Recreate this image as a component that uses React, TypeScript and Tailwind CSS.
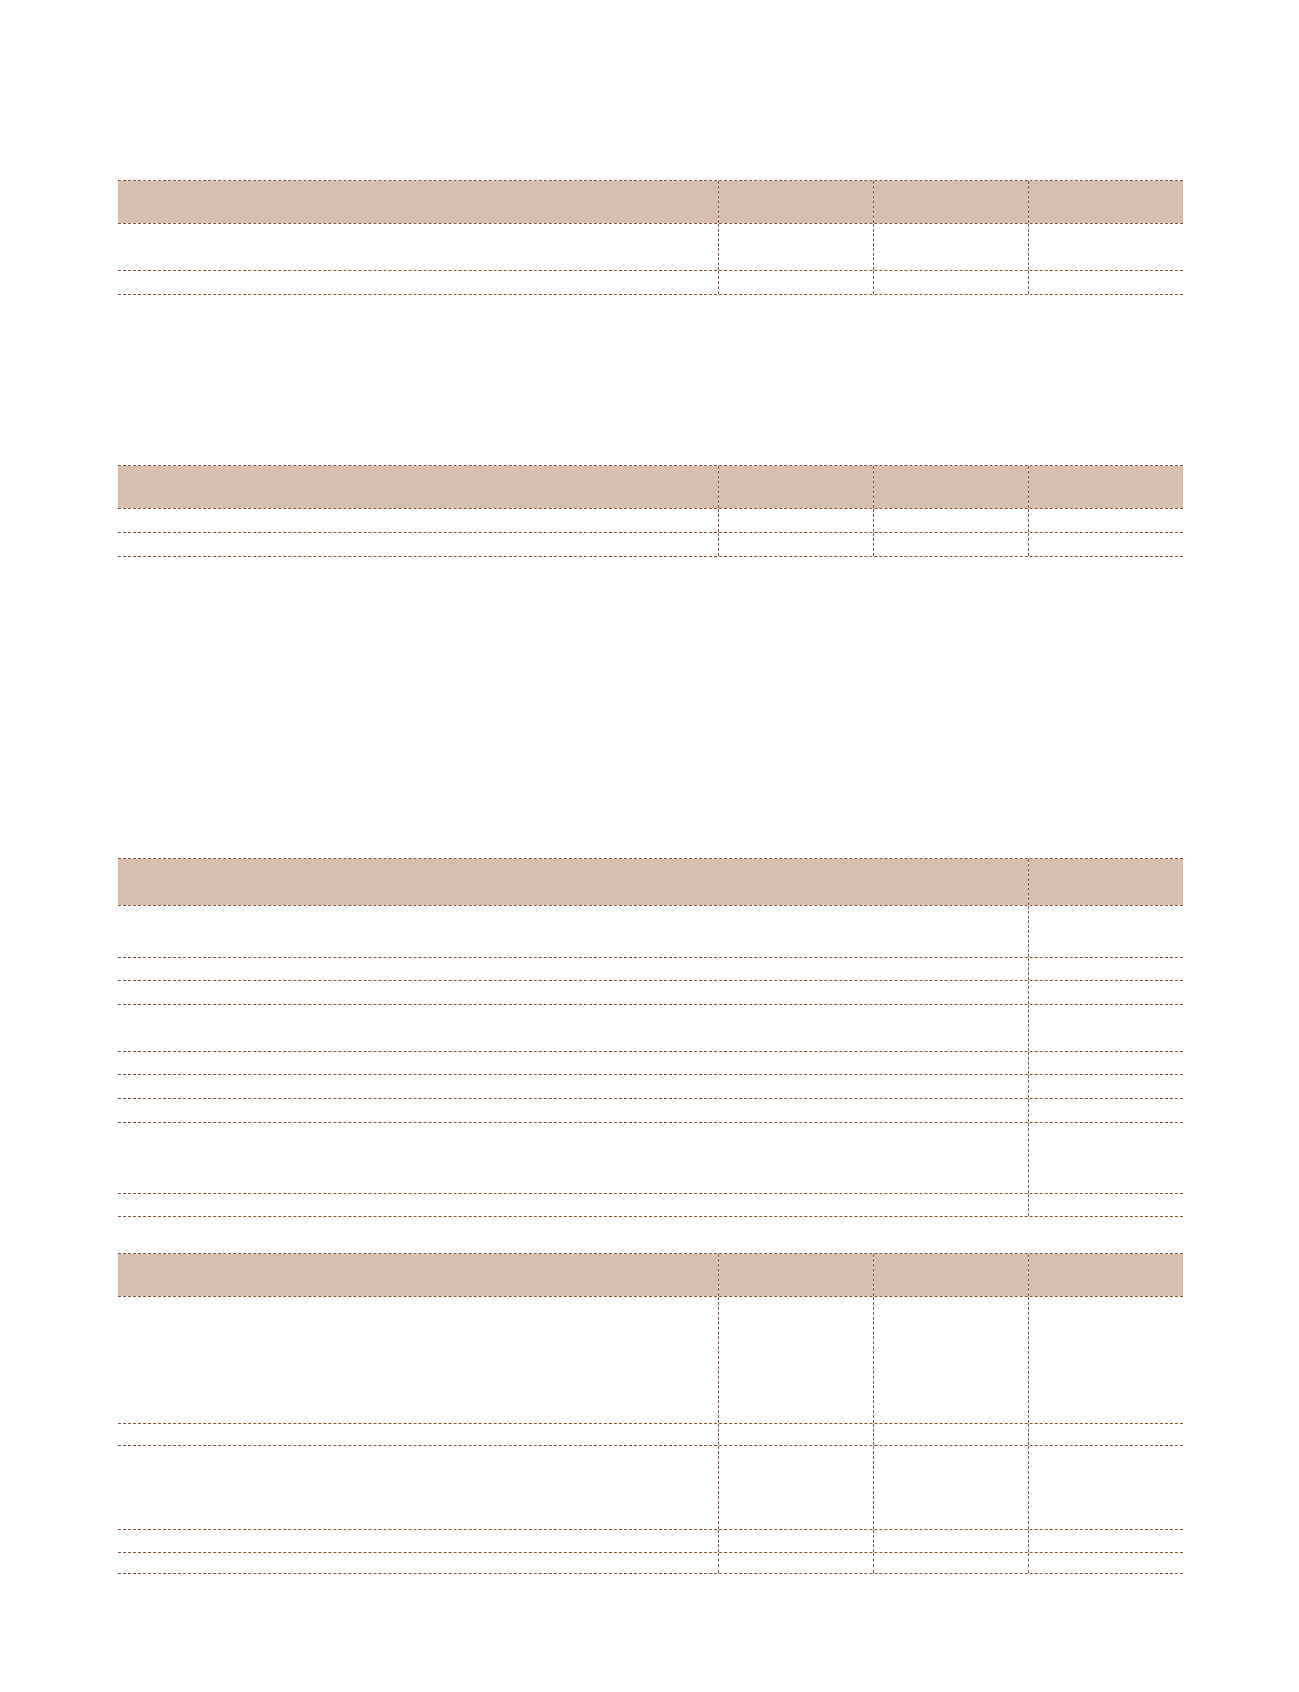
const LINE = "border-[#86573f]";

type Table = { cols: "four" | "two"; header: number; rows: number[]; mt: string };

const TABLES: Table[] = [
  { cols: "four", header: 44, rows: [47, 24], mt: "mt-0" },
  { cols: "four", header: 44, rows: [24, 24], mt: "mt-[170px]" },
  { cols: "two", header: 48, rows: [52, 23, 24, 47, 23, 24, 24, 71, 23], mt: "mt-[301px]" },
  { cols: "four", header: 44, rows: [127, 22, 84, 23, 21], mt: "mt-[36px]" },
];

const GRID = {
  four: "grid grid-cols-[600px_155px_155px_155px]",
  two: "grid grid-cols-[910px_155px]",
};

function cellCount(t: Table) {
  return t.cols === "four" ? 4 : 2;
}

function DashedTable({ t }: { t: Table }) {
  const n = cellCount(t);
  return (
    <div className={`w-[1065px] ${t.mt}`}>
      {/* header band: white gaps between dashes, like the print original */}
      <div className={`${GRID[t.cols]} border-y border-dashed ${LINE} bg-white`} style={{ height: t.header }}>
        {Array.from({ length: n }).map((_, i) => (
          <div
            key={i}
            className={`bg-[#d8bfad] bg-clip-padding ${i > 0 ? `border-l border-dashed ${LINE}` : ""}`}
          />
        ))}
      </div>
      {t.rows.map((h, r) => (
        <div key={r} className={`${GRID[t.cols]} border-b border-dashed ${LINE}`} style={{ height: h }}>
          {Array.from({ length: n }).map((_, i) => (
            <div key={i} className={i > 0 ? `border-l border-dashed ${LINE}` : ""} />
          ))}
        </div>
      ))}
    </div>
  );
}

export default function App() {
  return (
    <div className="min-h-[1692px] bg-white pl-[118px] pt-[180px] font-['Liberation_Sans',sans-serif]">
      {TABLES.map((t, i) => (
        <DashedTable key={i} t={t} />
      ))}
    </div>
  );
}
